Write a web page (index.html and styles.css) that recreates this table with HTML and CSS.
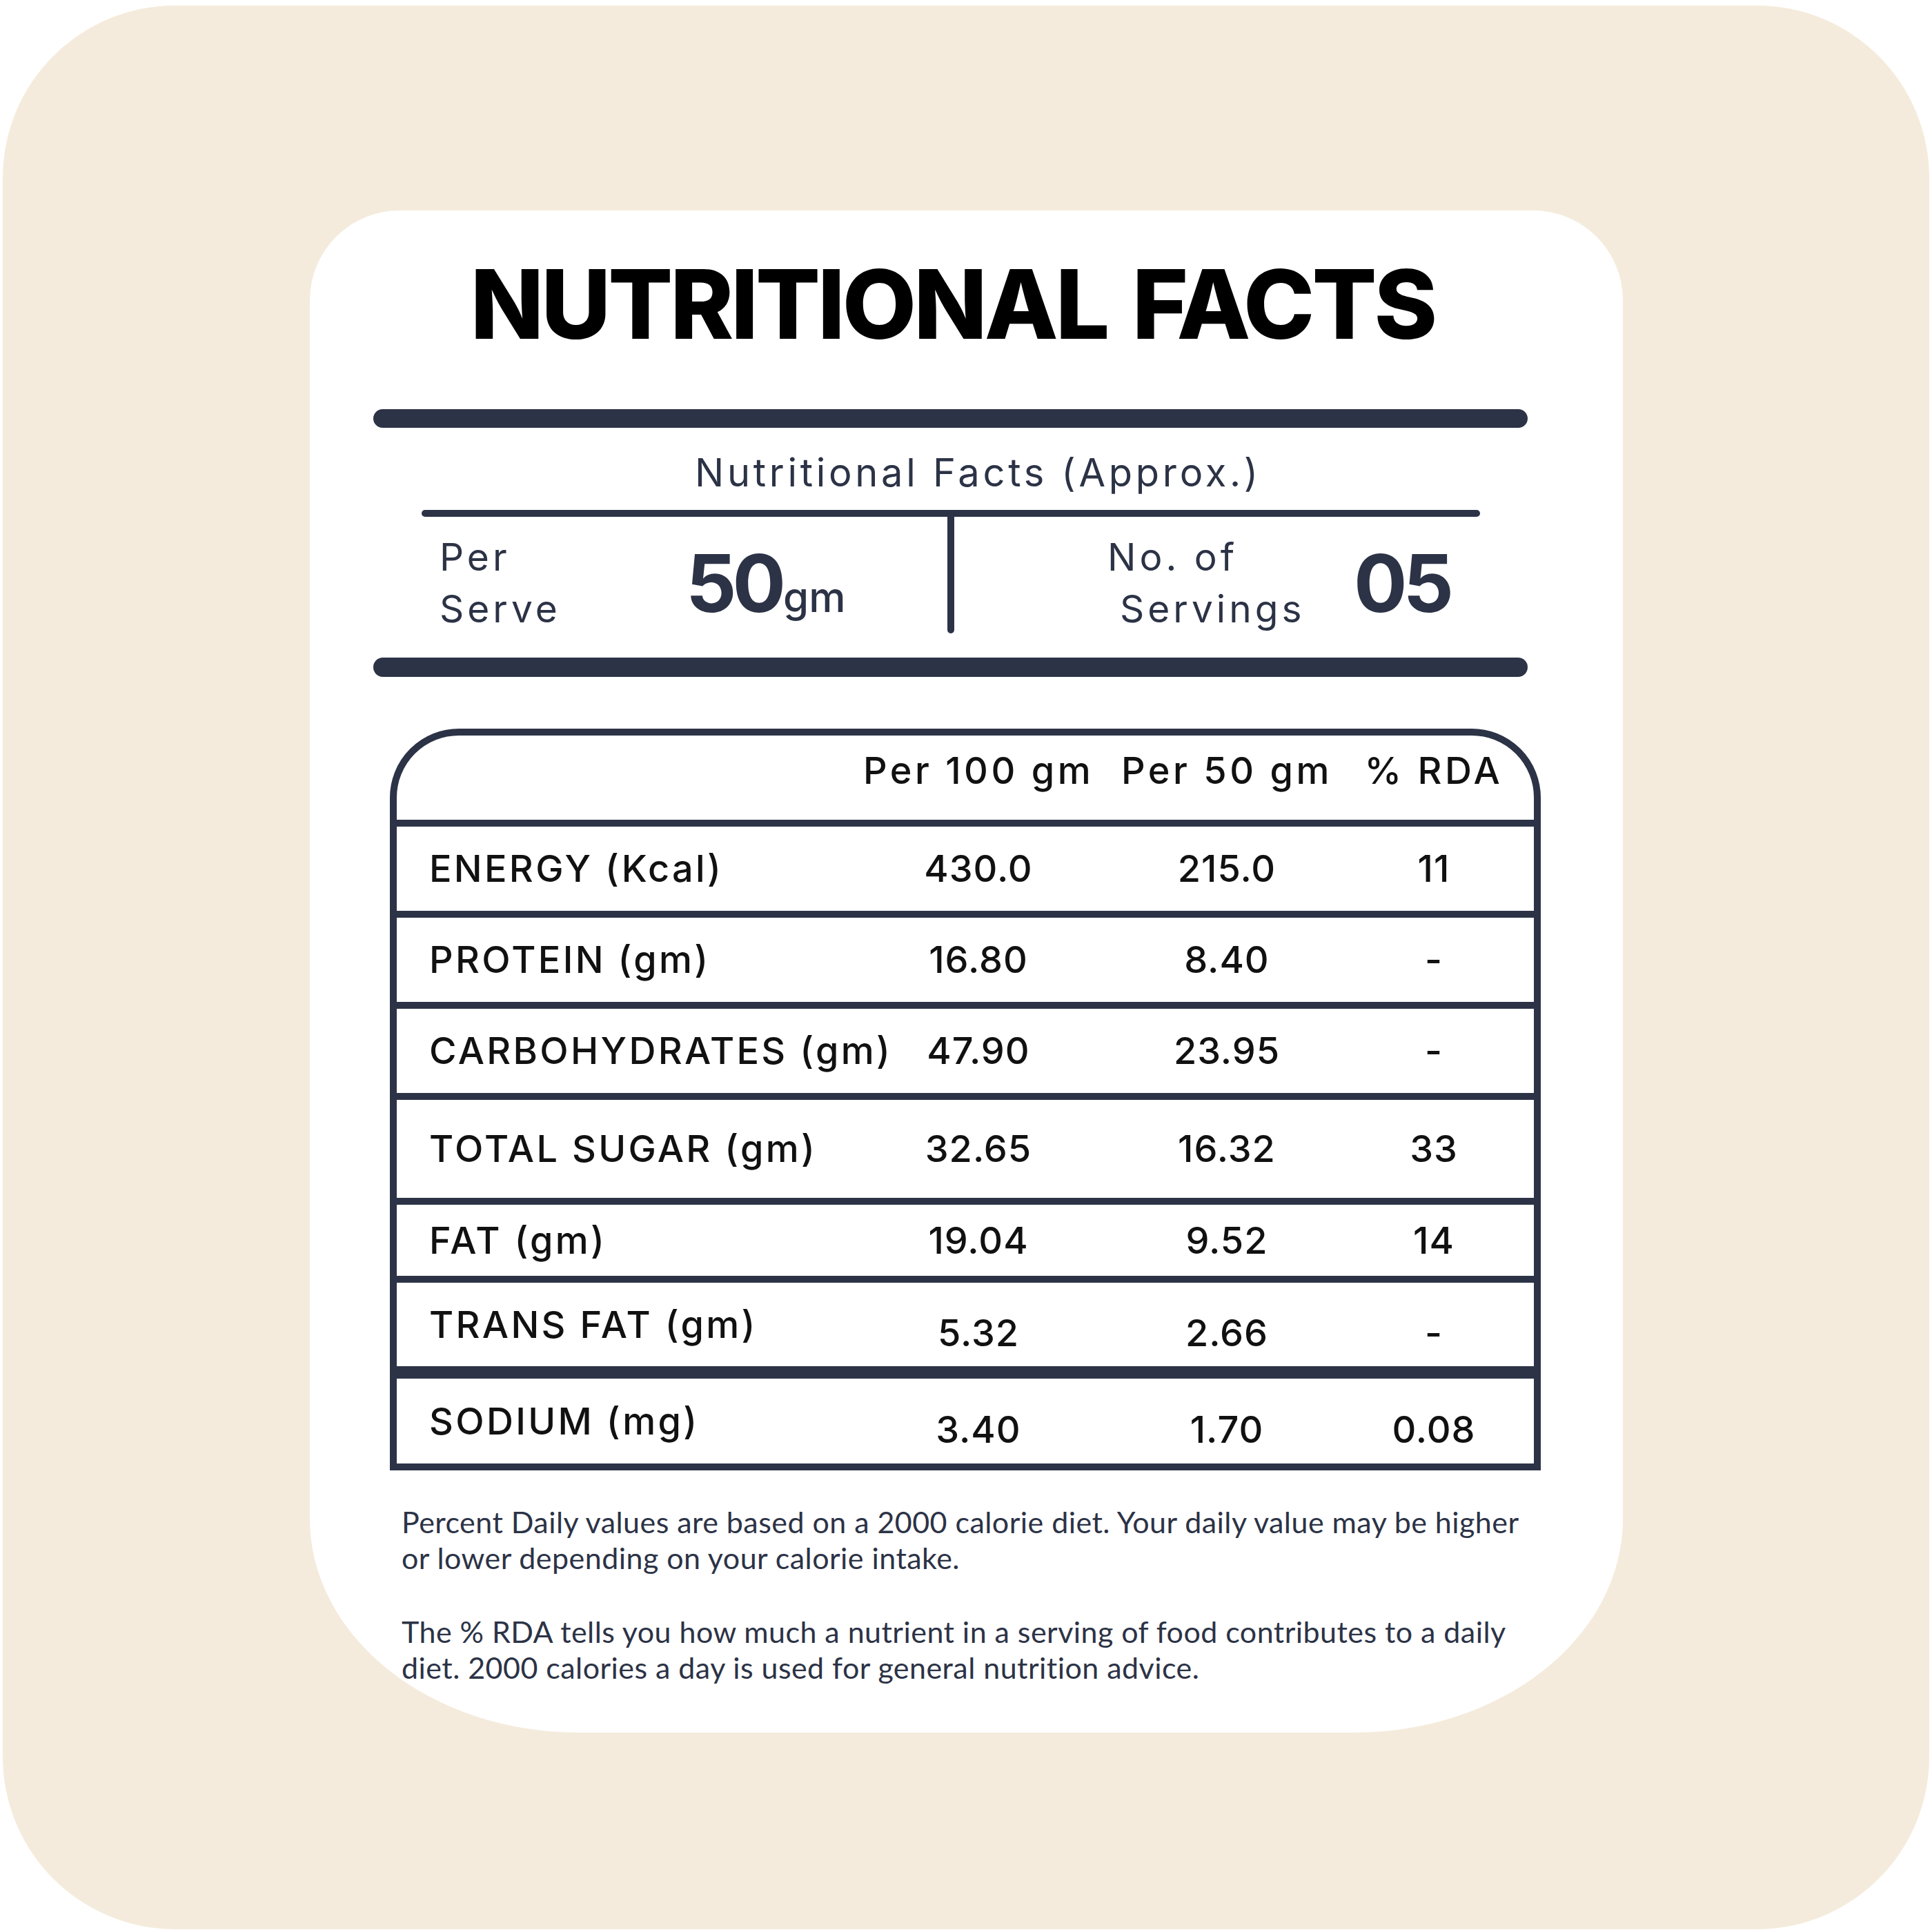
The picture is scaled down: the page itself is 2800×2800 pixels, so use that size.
FILE: index.html
```html
<!DOCTYPE html>
<html lang="en">
<head>
<meta charset="utf-8">
<title>Nutritional Facts</title>
<link rel="stylesheet" href="styles.css">
</head>
<body>
<div class="page">
  <div class="outer">
    <section class="card">
      <h1 class="title">NUTRITIONAL FACTS</h1>

      <div class="summary">
        <div class="bar"></div>
        <p class="subtitle">Nutritional Facts (Approx.)</p>
        <div class="summary-inner">
          <div class="thin-line"></div>
          <div class="serving">
            <div class="serving-cell serving-cell--left">
              <div class="serving-label"><span>Per</span><span>Serve</span></div>
              <div class="serving-value">50<span class="unit">gm</span></div>
            </div>
            <div class="serving-divider"></div>
            <div class="serving-cell serving-cell--right">
              <div class="serving-label"><span>No. of</span><span class="indent">Servings</span></div>
              <div class="serving-value">05</div>
            </div>
          </div>
        </div>
        <div class="bar bar--bottom"></div>
      </div>

      <div class="nutri-table">
        <div class="nt-row nt-head"><span></span><span>Per 100 gm</span><span>Per 50 gm</span><span>% RDA</span></div>
        <div class="nt-row"><span class="nt-label">ENERGY (Kcal)</span><span>430.0</span><span>215.0</span><span>11</span></div>
        <div class="nt-row"><span class="nt-label">PROTEIN (gm)</span><span>16.80</span><span>8.40</span><span>-</span></div>
        <div class="nt-row"><span class="nt-label">CARBOHYDRATES (gm)</span><span>47.90</span><span>23.95</span><span>-</span></div>
        <div class="nt-row nt-row--tall"><span class="nt-label">TOTAL SUGAR (gm)</span><span>32.65</span><span>16.32</span><span>33</span></div>
        <div class="nt-row nt-row--short"><span class="nt-label">FAT (gm)</span><span>19.04</span><span>9.52</span><span>14</span></div>
        <div class="nt-row nt-row--drop"><span class="nt-label">TRANS FAT (gm)</span><span>5.32</span><span>2.66</span><span>-</span></div>
        <div class="nt-row nt-row--drop nt-row--thick"><span class="nt-label">SODIUM (mg)</span><span>3.40</span><span>1.70</span><span>0.08</span></div>
      </div>

      <div class="notes">
        <p>Percent Daily values are based on a 2000 calorie diet. Your daily value may be higher<br>or lower depending on your calorie intake.</p>
        <p>The % RDA tells you how much a nutrient in a serving of food contributes to a daily<br>diet. 2000 calories a day is used for general nutrition advice.</p>
      </div>
    </section>
  </div>
</div>
</body>
</html>
```

FILE: styles.css
```css
* { box-sizing: border-box; }

body {
  margin: 0;
  background: #ffffff;
}

.page {
  width: 2800px;
  height: 2800px;
  padding: 8px 4px 4px 4px;
}

.outer {
  height: 100%;
  background: #F4EBDC;
  border-radius: 250px;
  padding: 297px 0 0 445px;
}

.card {
  width: 1903px;
  height: 2206px;
  background: #ffffff;
  border-radius: 130px 130px 390px 390px / 130px 130px 310px 310px;
  padding-top: 66px;
}

.title {
  margin: 0 40px 0 0;
  font-family: Inter, "Liberation Sans", sans-serif;
  font-weight: 800;
  font-size: 139px;
  line-height: 1;
  letter-spacing: -4px;
  word-spacing: 10px;
  color: #000000;
  text-align: center;
}

.summary {
  margin: 83px 0 0 92px;
  width: 1673px;
  color: #2C3346;
  font-family: Inter, "Liberation Sans", sans-serif;
}

.bar {
  height: 27px;
  border-radius: 14px;
  background: #2C3346;
}

.bar--bottom {
  margin-top: 35px;
  height: 28px;
}

.subtitle {
  margin: 31px 0 0;
  padding-left: 80px;
  font-size: 56px;
  font-weight: 400;
  line-height: 68px;
  letter-spacing: 4.7px;
  text-align: center;
}

.summary-inner {
  margin: 20px 0 0 70px;
  width: 1534px;
}

.thin-line {
  height: 10px;
  border-radius: 5px;
  background: #2C3346;
}

.serving {
  display: flex;
  height: 169px;
}

.serving-cell {
  flex: 0 0 762px;
  min-width: 0;
  display: flex;
  align-items: center;
  padding-top: 23px;
}

.serving-cell--left { padding-left: 26px; }
.serving-cell--right { padding-left: 222px; }

.serving-divider {
  flex: 0 0 10px;
  background: #2C3346;
  border-radius: 0 0 5px 5px;
}

.serving-label {
  flex: 0 0 357px;
  display: flex;
  flex-direction: column;
  font-size: 55px;
  font-weight: 400;
  line-height: 75px;
  letter-spacing: 5px;
  white-space: nowrap;
}

.serving-label .indent { padding-left: 18px; }

.serving-value {
  display: flex;
  align-items: baseline;
  font-size: 115px;
  font-weight: 700;
  line-height: 1;
  letter-spacing: -6px;
}

.unit {
  margin-left: 2px;
  font-size: 60px;
  font-weight: 500;
  line-height: 1;
  letter-spacing: 0;
}

.nutri-table {
  margin: 75px 0 0 116px;
  width: 1668px;
  border: 10px solid #2C3346;
  border-radius: 100px 100px 0 0;
  font-family: Inter, "Liberation Sans", sans-serif;
  color: #111111;
}

.nt-row {
  display: grid;
  grid-template-columns: 673px 340px 380px 220px;
  align-items: center;
  box-sizing: content-box;
  height: 122px;
  border-top: 10px solid #2C3346;
  font-size: 54px;
  font-weight: 500;
  line-height: 1;
  letter-spacing: 1px;
}

.nt-row > span {
  text-align: center;
  white-space: nowrap;
}

.nt-row > .nt-label {
  text-align: left;
  padding-left: 47px;
  letter-spacing: 3.3px;
}

.nt-head {
  border-top: 0;
  height: 102px;
  padding-bottom: 20px;
  letter-spacing: 4.5px;
}

.nt-row--tall { height: 142px; }
.nt-row--short { height: 103px; }
.nt-row--drop { height: 121px; }
.nt-row--thick { border-top-width: 18px; height: 123px; }

.nt-row--drop > span:not(.nt-label) { padding-top: 24px; }

.notes {
  margin: 49px 0 0 133px;
  font-family: Lato, "Open Sans", sans-serif;
  font-size: 43px;
  line-height: 52px;
  letter-spacing: 0.45px;
  color: #2C3346;
  white-space: nowrap;
}

.notes p { margin: 0; }
.notes p + p { margin-top: 55px; }
```
